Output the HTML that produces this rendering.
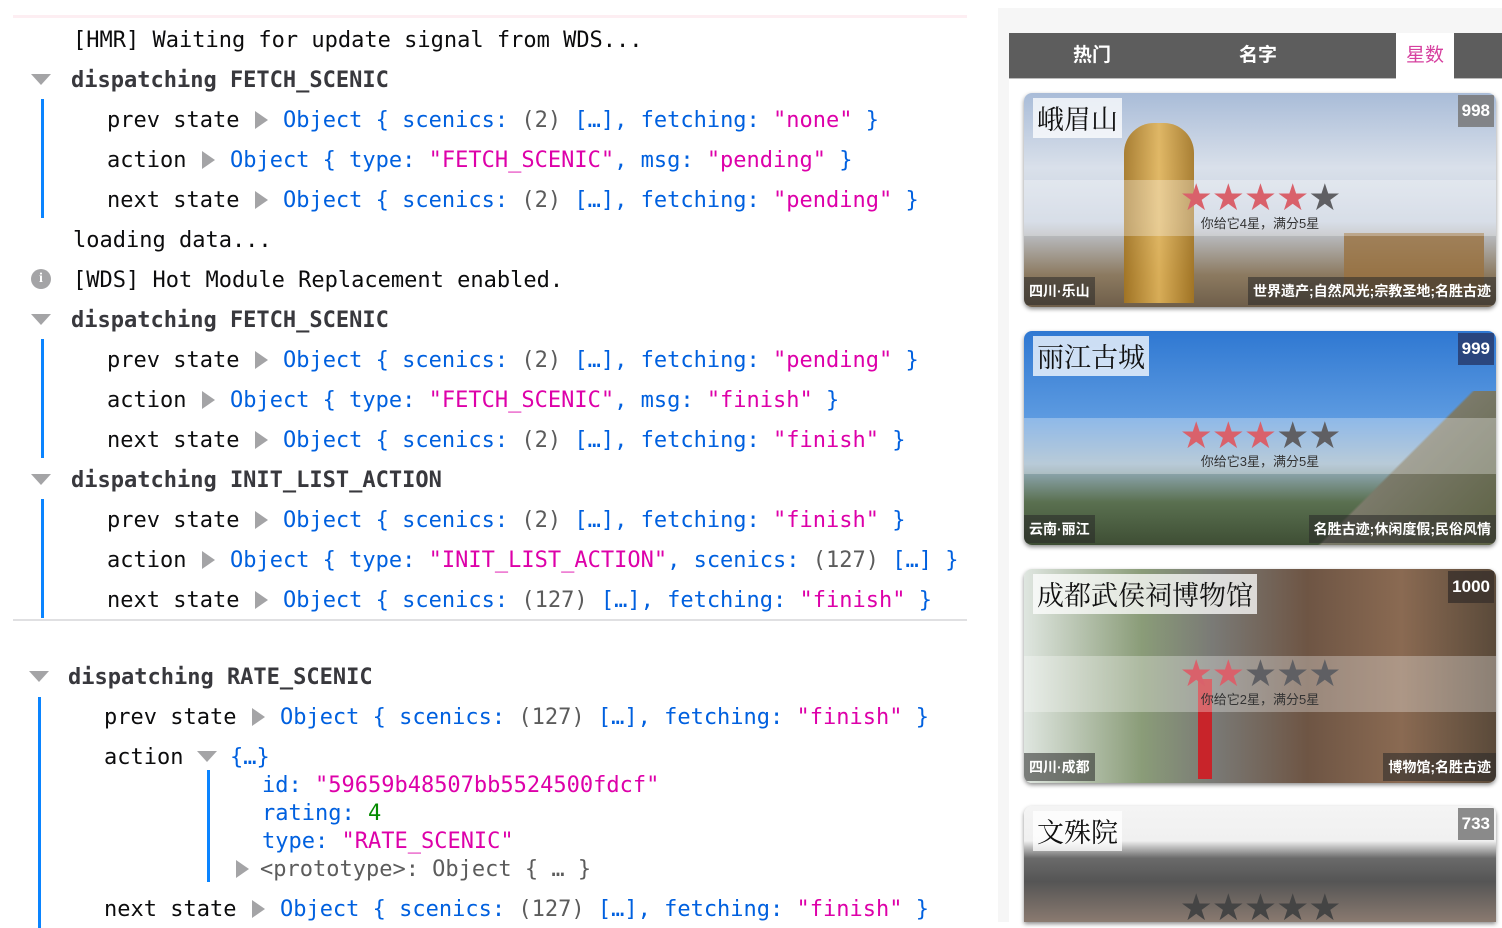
<!DOCTYPE html>
<html><head><meta charset="utf-8"><style>
*{margin:0;padding:0;box-sizing:border-box}
body{width:1502px;height:928px;background:#fff;position:relative;overflow:hidden;font-family:"DejaVu Sans Mono","Liberation Mono",monospace;font-size:22px;color:#0c0c0d}
.l{position:absolute;height:28px;line-height:28px;white-space:pre;margin-top:2px}
.b{color:#0060df}.p{color:#dd00a9}.g{color:#058b00}.k{color:#5c5c5c}.h{font-weight:bold;color:#38383d}
.tr{display:inline-block;width:0;height:0;border-top:9px solid transparent;border-bottom:9px solid transparent;border-left:13px solid #a4a4a6;vertical-align:-2px;margin:0 2px}
.td{position:absolute;width:0;height:0;border-left:10px solid transparent;border-right:10px solid transparent;border-top:11px solid #a4a4a6}
.tdi{display:inline-block;width:0;height:0;border-left:10px solid transparent;border-right:10px solid transparent;border-top:11px solid #a4a4a6;vertical-align:2px}
.vb{position:absolute;width:3px;background:#0a84ff}
.cjk{font-family:"Liberation Sans","Noto Sans CJK SC",sans-serif}
.card{position:absolute;left:1024px;width:472px;height:214px;border-radius:8px;overflow:hidden;box-shadow:0 2px 4px rgba(0,0,0,.45)}
.tt{position:absolute;left:9px;top:5px;height:40px;padding:0 4px;background:rgba(255,255,255,.75);font-family:"Noto Serif CJK SC",serif;font-size:27px;line-height:40px;color:#111}
.cnt{position:absolute;right:2px;top:2px;height:32px;padding:0 4px;background:rgba(120,120,120,.85);color:#fff;font-family:"Liberation Sans",sans-serif;font-weight:bold;font-size:17px;line-height:32px}
.band{position:absolute;left:0;right:0;top:87px;height:56px;background:rgba(255,255,255,.3);text-align:center}
.st{font-size:37px;line-height:36px;letter-spacing:-1px;font-family:"DejaVu Sans",sans-serif}
.sr{color:#d9616b}.sg{color:#5f5f63}
.sm{font-size:13px;color:#333;line-height:16px;font-family:"Liberation Sans","Noto Sans CJK SC",sans-serif}
.bot{position:absolute;left:0;right:0;bottom:2px;height:28px;color:#fff;font-weight:bold;font-size:14px;line-height:28px;font-family:"Liberation Sans","Noto Sans CJK SC",sans-serif}
.bot span{position:absolute;background:rgba(40,40,40,.55);padding:0 5px}
</style></head><body>
<div style="position:absolute;left:13px;top:15px;width:954px;height:3px;background:#fdeef2"></div>
<div style="position:absolute;left:13px;top:619px;width:954px;height:2px;background:#e0e0e2"></div>

<div class="l" style="left:73px;top:25px">[HMR] Waiting for update signal from WDS...</div>
<div class="td" style="left:31px;top:74px"></div>
<div class="l h" style="left:71px;top:65px">dispatching FETCH_SCENIC</div>
<div class="vb" style="left:41px;top:99px;height:119px"></div>
<div class="l" style="left:107px;top:105px">prev state <span class="tr"></span> <span class="b">Object { scenics: <span class="k">(2)</span> […], fetching: <span class="p">"none"</span> }</span></div>
<div class="l" style="left:107px;top:145px">action <span class="tr"></span> <span class="b">Object { type: <span class="p">"FETCH_SCENIC"</span>, msg: <span class="p">"pending"</span> }</span></div>
<div class="l" style="left:107px;top:185px">next state <span class="tr"></span> <span class="b">Object { scenics: <span class="k">(2)</span> […], fetching: <span class="p">"pending"</span> }</span></div>
<div class="l" style="left:73px;top:225px">loading data...</div>
<div style="position:absolute;left:31px;top:269px;width:20px;height:20px;border-radius:50%;background:#a4a4a6;color:#fff;font:bold 14px 'Liberation Serif',serif;text-align:center;line-height:20px">i</div>
<div class="l" style="left:73px;top:265px">[WDS] Hot Module Replacement enabled.</div>
<div class="td" style="left:31px;top:314px"></div>
<div class="l h" style="left:71px;top:305px">dispatching FETCH_SCENIC</div>
<div class="vb" style="left:41px;top:339px;height:119px"></div>
<div class="l" style="left:107px;top:345px">prev state <span class="tr"></span> <span class="b">Object { scenics: <span class="k">(2)</span> […], fetching: <span class="p">"pending"</span> }</span></div>
<div class="l" style="left:107px;top:385px">action <span class="tr"></span> <span class="b">Object { type: <span class="p">"FETCH_SCENIC"</span>, msg: <span class="p">"finish"</span> }</span></div>
<div class="l" style="left:107px;top:425px">next state <span class="tr"></span> <span class="b">Object { scenics: <span class="k">(2)</span> […], fetching: <span class="p">"finish"</span> }</span></div>
<div class="td" style="left:31px;top:474px"></div>
<div class="l h" style="left:71px;top:465px">dispatching INIT_LIST_ACTION</div>
<div class="vb" style="left:41px;top:499px;height:119px"></div>
<div class="l" style="left:107px;top:505px">prev state <span class="tr"></span> <span class="b">Object { scenics: <span class="k">(2)</span> […], fetching: <span class="p">"finish"</span> }</span></div>
<div class="l" style="left:107px;top:545px">action <span class="tr"></span> <span class="b">Object { type: <span class="p">"INIT_LIST_ACTION"</span>, scenics: <span class="k">(127)</span> […] }</span></div>
<div class="l" style="left:107px;top:585px">next state <span class="tr"></span> <span class="b">Object { scenics: <span class="k">(127)</span> […], fetching: <span class="p">"finish"</span> }</span></div>

<div class="td" style="left:29px;top:671px"></div>
<div class="l h" style="left:68px;top:662px">dispatching RATE_SCENIC</div>
<div class="vb" style="left:38px;top:697px;height:231px"></div>
<div class="l" style="left:104px;top:702px">prev state <span class="tr"></span> <span class="b">Object { scenics: <span class="k">(127)</span> […], fetching: <span class="p">"finish"</span> }</span></div>
<div class="l" style="left:104px;top:742px">action <span class="tdi"></span> <span class="b">{…}</span></div>
<div class="vb" style="left:207px;top:770px;height:112px"></div>
<div class="l" style="left:262px;top:770px"><span class="b">id: </span><span class="p">"59659b48507bb5524500fdcf"</span></div>
<div class="l" style="left:262px;top:798px"><span class="b">rating: </span><span class="g">4</span></div>
<div class="l" style="left:262px;top:826px"><span class="b">type: </span><span class="p">"RATE_SCENIC"</span></div>
<div class="l k" style="left:236px;top:854px"><span class="tr" style="margin:0 11px 0 0"></span>&lt;prototype&gt;: Object { … }</div>
<div class="l" style="left:104px;top:894px">next state <span class="tr"></span> <span class="b">Object { scenics: <span class="k">(127)</span> […], fetching: <span class="p">"finish"</span> }</span></div>

<!-- right panel -->
<div style="position:absolute;left:998px;top:8px;width:504px;height:914px;background:#f6f6f6"></div>
<div style="position:absolute;left:1009px;top:78px;width:493px;height:844px;background:#fff"></div>
<div class="cjk" style="position:absolute;left:1009px;top:33px;width:493px;height:46px;background:#5d5d5d;border-bottom:1px solid #bbb;color:#fff;font-size:19px;font-weight:bold;line-height:46px">
<span style="position:absolute;left:64px">热门</span>
<span style="position:absolute;left:230px">名字</span>
<span style="position:absolute;left:387px;top:0;width:58px;height:46px;background:#fff;color:#d6409f;font-weight:normal;text-align:center">星数</span>
</div>

<div class="card" style="top:93px;background:linear-gradient(180deg,#a9bcd8 0%,#d9e0ea 35%,#c7d0de 60%,#8c7a60 85%,#6e5e4a 100%)">
<div style="position:absolute;left:100px;top:30px;width:70px;height:180px;background:linear-gradient(90deg,#a47520,#e2b458,#a47520);border-radius:30px 30px 0 0;opacity:.9"></div>
<div style="position:absolute;left:320px;top:140px;width:140px;height:60px;background:#9a7240;opacity:.8"></div>
<div class="tt">峨眉山</div><div class="cnt">998</div>
<div class="band"><div class="st"><span class="sr">★★★★</span><span class="sg">★</span></div><div class="sm">你给它4星，满分5星</div></div>
<div class="bot"><span style="left:0">四川·乐山</span><span style="right:0">世界遗产;自然风光;宗教圣地;名胜古迹</span></div>
</div>

<div class="card" style="top:331px;background:linear-gradient(180deg,#2f78d2 0%,#5c9ae0 40%,#9ab4c8 62%,#5a7050 80%,#3e4e34 100%)">
<div style="position:absolute;left:290px;top:60px;width:190px;height:160px;background:linear-gradient(135deg,transparent 45%,#7b7a6a 46%,#5a6040 100%)"></div>
<div class="tt">丽江古城</div><div class="cnt" style="background:rgba(40,60,110,.85)">999</div>
<div class="band"><div class="st"><span class="sr">★★★</span><span class="sg">★★</span></div><div class="sm">你给它3星，满分5星</div></div>
<div class="bot"><span style="left:0">云南·丽江</span><span style="right:0">名胜古迹;休闲度假;民俗风情</span></div>
</div>

<div class="card" style="top:569px;background:linear-gradient(90deg,#dfe6e0 0%,#8a9c78 25%,#7a7a76 40%,#6e5544 60%,#8a6a52 80%,#5a4a3a 100%)">
<div style="position:absolute;left:174px;top:110px;width:14px;height:100px;background:#c8242a"></div>
<div class="tt">成都武侯祠博物馆</div><div class="cnt" style="background:rgba(60,50,45,.85)">1000</div>
<div class="band"><div class="st"><span class="sr">★★</span><span class="sg">★★★</span></div><div class="sm">你给它2星，满分5星</div></div>
<div class="bot"><span style="left:0">四川·成都</span><span style="right:0">博物馆;名胜古迹</span></div>
</div>

<div class="card" style="top:806px;height:116px;border-radius:8px 8px 0 0;background:linear-gradient(180deg,#f4f4f4 0%,#f0f0f0 30%,#6a6a6a 45%,#555 65%,#8a7a70 100%)">
<div class="tt">文殊院</div><div class="cnt">733</div>
<div class="st" style="position:absolute;left:0;right:0;top:84px;text-align:center;color:#444">★★★★★</div>
</div>
</body></html>
